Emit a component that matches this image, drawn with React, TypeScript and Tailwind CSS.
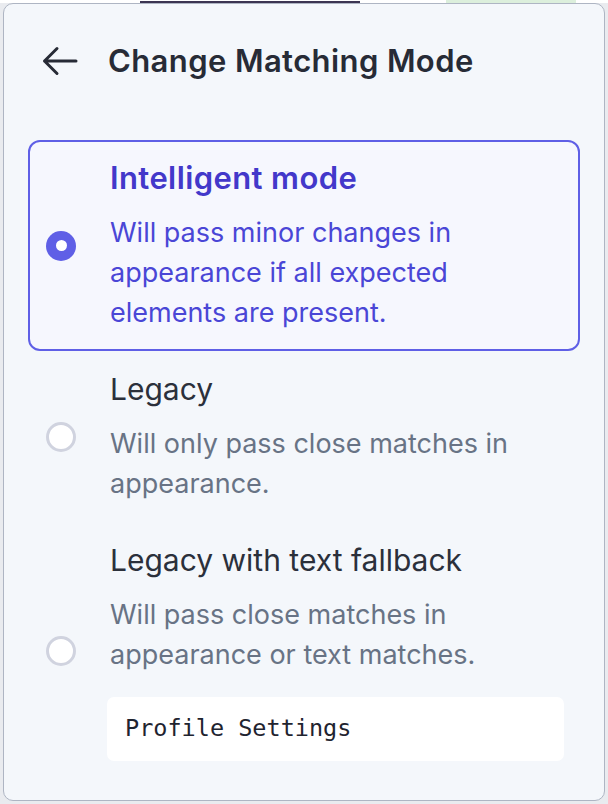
import React, { useState } from "react";

type Mode = {
  id: string;
  title: string;
  description: string;
  example?: string;
};

const modes: Mode[] = [
  {
    id: "intelligent",
    title: "Intelligent mode",
    description:
      "Will pass minor changes in appearance if all expected elements are present.",
  },
  {
    id: "legacy",
    title: "Legacy",
    description: "Will only pass close matches in appearance.",
  },
  {
    id: "legacy-text",
    title: "Legacy with text fallback",
    description: "Will pass close matches in appearance or text matches.",
    example: "Profile Settings",
  },
];

const BackArrow = () => (
  <svg width="36" height="30" viewBox="0 0 36 30" fill="none">
    <path
      d="M2.5 15H34M15 2.5L2.5 15L15 27.5"
      stroke="#272b36"
      strokeWidth="3"
      strokeLinecap="round"
      strokeLinejoin="round"
    />
  </svg>
);

const Radio = ({ checked }: { checked: boolean }) =>
  checked ? (
    <span className="flex h-[30px] w-[30px] flex-none items-center justify-center rounded-full bg-[#5f5fe6]">
      <span className="h-[11px] w-[11px] rounded-full bg-white" />
    </span>
  ) : (
    <span className="h-[30px] w-[30px] flex-none rounded-full border-[3px] border-[#d0d3df] bg-white" />
  );

export default function App() {
  const [selected, setSelected] = useState("intelligent");

  return (
    <div
      className="relative h-[804px] w-[608px] overflow-hidden bg-[#e9ebef]"
      style={{ fontFamily: "Inter, 'Noto Sans', sans-serif" }}
    >
      {/* bits of the page behind the popover */}
      <div className="flex h-[3px] w-full items-end bg-white">
        <div className="ml-[140px] h-[2px] w-[220px] bg-[#3b3552]" />
        <div className="ml-[86px] h-[3px] w-[130px] bg-[#dcefdc]" />
      </div>

      <div className="mx-[3px] flex h-[798px] flex-col rounded-[10px] border-[1.5px] border-[#aeb5c3] bg-[#f4f7fb] px-6">
        <div className="flex h-[114px] items-center gap-[30px] pl-[14px]">
          <button className="flex items-center">
            <BackArrow />
          </button>
          <h2 className="text-[31px] font-semibold leading-[40px] tracking-[0.4px] text-[#272b36]">
            Change Matching Mode
          </h2>
        </div>

        <div className="mt-[22px] flex flex-col">
          {modes.map((mode) => {
            const active = selected === mode.id;
            return (
              <div
                key={mode.id}
                onClick={() => setSelected(mode.id)}
                className={
                  active
                    ? "flex cursor-pointer items-center gap-[34px] rounded-[12px] border-2 border-[#5f5fe6] bg-[#f6f7fe] py-4 pl-[16px] pr-4"
                    : "flex cursor-pointer items-center gap-[34px] rounded-[12px] border-2 border-transparent py-4 pl-[16px] pr-4"
                }
              >
                <Radio checked={active} />
                <div className="flex flex-1 flex-col">
                  <div
                    className={
                      active
                        ? "text-[31px] font-semibold leading-[40px] tracking-[0.4px] text-[#4338ca]"
                        : "text-[30px] font-normal leading-[40px] text-[#2b303b]"
                    }
                  >
                    {mode.title}
                  </div>
                  <p
                    className={
                      active
                        ? "mt-[15px] text-[27px] leading-[40px] text-[#4a46d6]"
                        : "mt-[15px] text-[27px] leading-[40px] text-[#687385]"
                    }
                  >
                    {mode.description}
                  </p>
                  {mode.example && (
                    <div className="mt-[22px] ml-[-3px] mr-[-2px] flex h-[64px] items-center rounded-[7px] bg-white px-[18px]">
                      <span
                        className="text-[23.5px] text-[#1f2430]"
                        style={{ fontFamily: "'DejaVu Sans Mono', 'Liberation Mono', monospace" }}
                      >
                        {mode.example}
                      </span>
                    </div>
                  )}
                </div>
              </div>
            );
          })}
        </div>
      </div>
    </div>
  );
}
